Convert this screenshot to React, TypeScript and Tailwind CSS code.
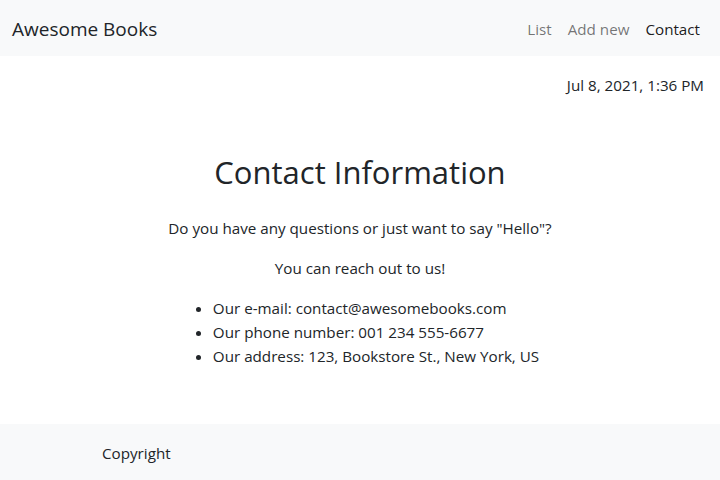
import React from 'react';

const font = { fontFamily: '"Open Sans", "Noto Sans", sans-serif' };

export default function App() {
  return (
    <div className="flex min-h-[480px] flex-col bg-white text-[15.2px] leading-6 text-[#212529]" style={font}>
      <nav className="flex h-14 items-center justify-between bg-[#f8f9fa] px-3 pt-[2px]">
        <a href="#" className="text-[19px] leading-[30px] text-[#212529]">Awesome Books</a>
        <ul className="flex items-center">
          <li><a href="#" className="block px-2 py-2 text-black/55">List</a></li>
          <li><a href="#" className="block px-2 py-2 text-black/55">Add new</a></li>
          <li><a href="#" className="block px-2 py-2 text-black/90">Contact</a></li>
        </ul>
      </nav>

      <main className="flex-1">
        <div className="pt-[17px] pr-4 text-right">Jul 8, 2021, 1:36 PM</div>

        <section className="mt-[55px] pb-14 text-center">
          <h1 className="text-[31px] leading-10">Contact Information</h1>
          <p className="mt-6">Do you have any questions or just want to say "Hello"?</p>
          <p className="mt-4">You can reach out to us!</p>
          <ul className="mt-4 inline-block list-disc pl-8 text-left">
            <li>Our e-mail: contact@awesomebooks.com</li>
            <li>Our phone number: 001 234 555-6677</li>
            <li>Our address: 123, Bookstore St., New York, US</li>
          </ul>
        </section>
      </main>

      <footer className="flex h-14 items-center bg-[#f8f9fa] pl-[102px] pt-[2px]">
        <p>Copyright</p>
      </footer>
    </div>
  );
}
